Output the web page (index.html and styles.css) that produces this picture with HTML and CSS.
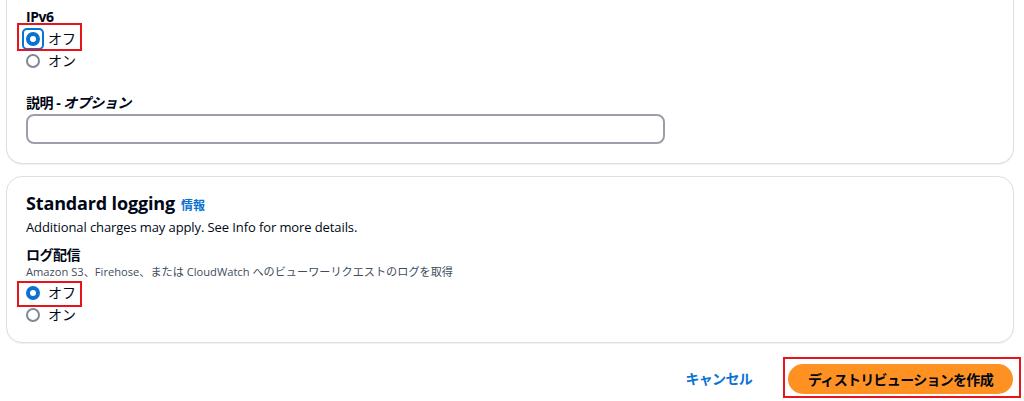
FILE: index.html
```html
<!DOCTYPE html>
<html lang="ja">
<head>
<meta charset="utf-8">
<link rel="stylesheet" href="styles.css">
</head>
<body>
<div class="page">
  <section class="card card-top">
    <div class="field-label">IPv6</div>
    <div class="radio-group">
      <label class="radio-row mark mark-a"><span class="radio checked focus"></span><span class="radio-text">オフ</span></label>
      <label class="radio-row"><span class="radio"></span><span class="radio-text">オン</span></label>
    </div>
    <div class="field-label desc-label">説明 - <i>オプション</i></div>
    <div class="input"></div>
  </section>

  <section class="card card-log">
    <h2 class="card-title">Standard logging <a class="info">情報</a></h2>
    <p class="card-desc">Additional charges may apply. See Info for more details.</p>
    <div class="field-label log-label">ログ配信</div>
    <div class="field-desc">Amazon S3、Firehose、または CloudWatch へのビューワーリクエストのログを取得</div>
    <div class="radio-group">
      <label class="radio-row mark mark-b"><span class="radio checked"></span><span class="radio-text">オフ</span></label>
      <label class="radio-row"><span class="radio"></span><span class="radio-text">オン</span></label>
    </div>
  </section>

  <div class="actions">
    <a class="cancel">キャンセル</a>
    <span class="btn-mark"><button class="primary">ディストリビューションを作成</button></span>
  </div>
</div>
</body>
</html>
```

FILE: styles.css
```css
* { box-sizing: border-box; }
html, body { margin: 0; padding: 0; background: #fff; }
body {
  font-family: "Open Sans", "Noto Sans CJK JP", sans-serif;
  color: #000716;
  font-size: 14px;
}
.page {
  padding: 0 10px 0 6px;
  width: 1024px;
  height: 401px;
  overflow: hidden;
}
.card {
  border: 1px solid #dcdfe3;
  border-radius: 16px;
  box-shadow: 0 1px 1px rgba(0, 7, 22, 0.06);
  background: #fff;
  padding: 0 19px;
}
.card-top {
  border-top: none;
  border-top-left-radius: 0;
  border-top-right-radius: 0;
  padding-top: 6px;
  height: 164px;
}
.field-label {
  font-weight: 700;
  font-size: 14px;
  line-height: 22px;
  letter-spacing: -0.5px;
}
.field-label i { font-style: italic; }
.radio-group { display: flex; flex-direction: column; align-items: flex-start; }
.radio-row {
  display: inline-flex;
  align-items: center;
  height: 22px;
  gap: 8px;
  position: relative;
}
.radio {
  width: 14px;
  height: 14px;
  border-radius: 50%;
  border: 2px solid #7d8998;
  background: #fff;
  position: relative;
  flex: none;
}
.radio.checked {
  border: 4px solid #0972d3;
}
.radio.focus::before {
  content: "";
  position: absolute;
  left: -8px; top: -8px; right: -8px; bottom: -8px;
  border: 2px solid #0972d3;
  border-radius: 5px;
}
.radio-text {
  font-size: 14px;
  line-height: 22px;
}
.mark::after {
  content: "";
  position: absolute;
  border: 2px solid #e8141c;
  left: -9px;
  right: -6px;
}
.mark-a::after { top: -5px; bottom: -1px; }
.mark-b::after { top: -1px; bottom: -3px; }
.desc-label { margin-top: 20px; }
.input {
  margin-top: 0;
  width: 639px;
  height: 30px;
  border: 2px solid #9ba0a8;
  border-radius: 8px;
}
.card-log {
  margin-top: 12px;
  padding-top: 15px;
  height: 167px;
}
.card-title {
  margin: 0;
  font-size: 18px;
  line-height: 22px;
  font-weight: 700;
  display: flex;
  align-items: baseline;
  gap: 6px;
  letter-spacing: -0.15px;
}
.info {
  font-size: 12px;
  font-weight: 700;
  color: #0972d3;
  letter-spacing: 0;
}
.card-desc {
  margin: 0;
  font-size: 13px;
  line-height: 20px;
  letter-spacing: -0.1px;
  color: #000716;
}
.log-label { margin-top: 8px; line-height: 20px; }
.field-desc {
  font-size: 11.15px;
  line-height: 14px;
  color: #414d5c;
  margin-bottom: 3px;
}
.actions {
  display: flex;
  justify-content: flex-end;
  align-items: center;
  margin-top: 14px;
  margin-right: -7px;
}
.cancel {
  font-weight: 700;
  font-size: 14px;
  letter-spacing: -0.7px;
  color: #0972d3;
  margin-right: 31px;
}
.btn-mark {
  display: block;
  border: 2px solid #e8141c;
  padding: 5px 6px 2px 3px;
}
.primary {
  display: block;
  font-family: inherit;
  font-weight: 700;
  font-size: 14px;
  letter-spacing: -0.7px;
  color: #000716;
  background: #ff9122;
  border: none;
  border-radius: 20px;
  height: 30px;
  width: 225px;
  padding: 0;
}
```
